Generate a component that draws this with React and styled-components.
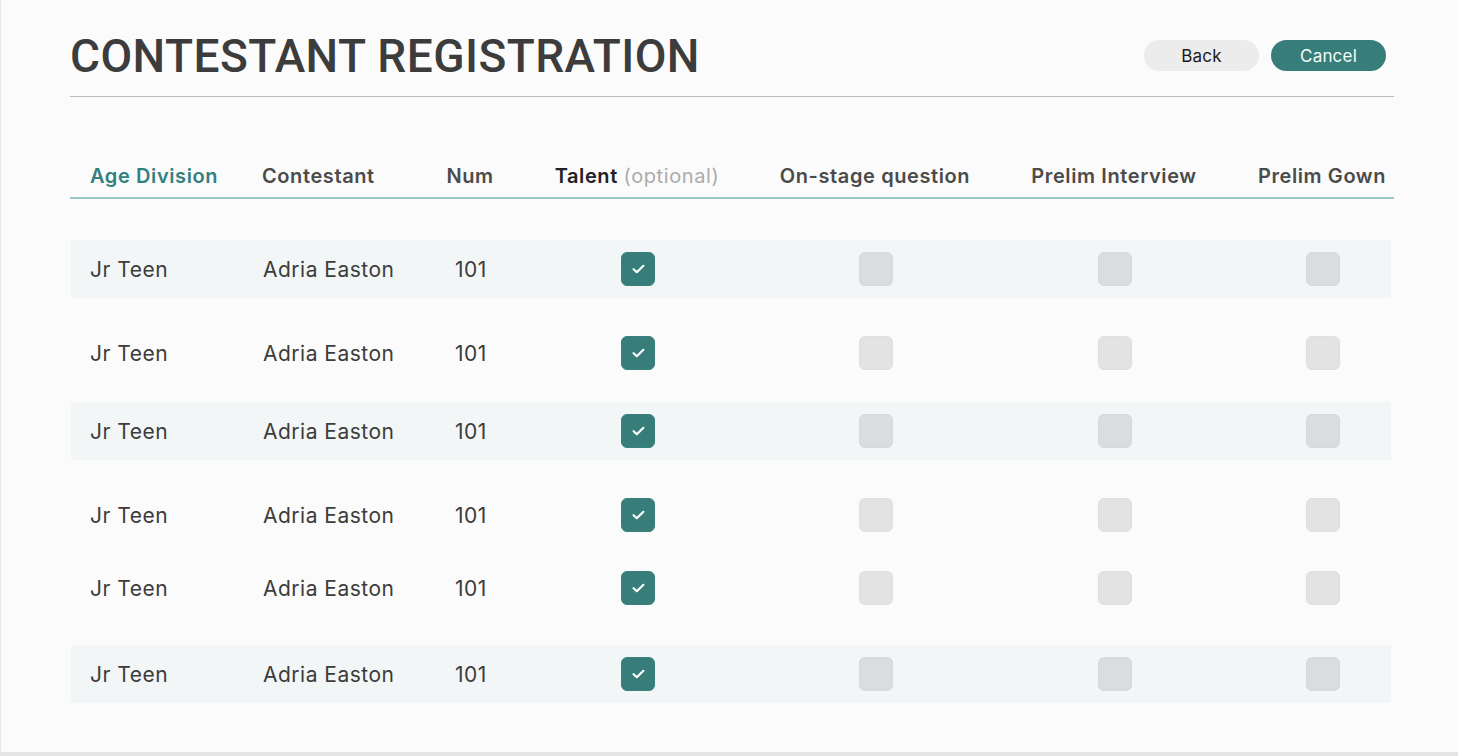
import React from "react";
import styled, { createGlobalStyle } from "styled-components";

const GlobalStyle = createGlobalStyle`
    html, body {
        margin: 0;
        padding: 0;
        background: #e4e4e4;
    }
    body {
        font-family: Inter, "Noto Sans", sans-serif;
    }
`;

// styles
const Page = styled.div`
    width: 1458px;
    height: 752px;
    box-sizing: border-box;
    background: #fbfbfb;
    border-left: 1px solid #e6e6e6;
    padding: 28px 64px 0 69px;
`;

const Header = styled.header`
    display: flex;
    align-items: center;
    justify-content: space-between;
    height: 56px;
    padding-bottom: 12px;
    border-bottom: 1px solid #bcbcbc;
`;

const Title = styled.h1`
    margin: 0;
    font-family: Roboto, "Liberation Sans", sans-serif;
    font-weight: 500;
    font-size: 46px;
    line-height: 58px;
    color: #3c3c3c;
    letter-spacing: 0.45px;
`;

const Actions = styled.div`
    display: flex;
    gap: 12px;
    margin-right: 8px;
    margin-top: -1px;
`;

const Button = styled.button`
    width: 115px;
    height: 31px;
    border: none;
    border-radius: 16px;
    font-family: Inter, sans-serif;
    font-size: 17px;
    letter-spacing: 0.2px;
    cursor: pointer;
    background: ${(p) => (p.primary ? "#377e7b" : "#ececec")};
    color: ${(p) => (p.primary ? "#f4fbfa" : "#1a1a1a")};
`;

const columns = "172px 178px 100px 234px 242px 236px 162px";

const HeadRow = styled.div`
    display: grid;
    grid-template-columns: ${columns};
    align-items: center;
    height: 42px;
    margin-top: 58px;
    border-bottom: 2px solid #97c8c7;
`;

const HeadCell = styled.div`
    font-size: 20px;
    font-weight: 600;
    letter-spacing: 0.6px;
    color: ${(p) => (p.active ? "#338080" : p.dark ? "#222" : "#4b4b4b")};
    text-align: ${(p) => (p.left ? "left" : "center")};
    padding-left: ${(p) => p.pad || 0}px;
    white-space: nowrap;
`;

const Optional = styled.span`
    font-weight: 400;
    color: #ababab;
`;

const Row = styled.div`
    display: grid;
    grid-template-columns: ${columns};
    align-items: center;
    height: 58px;
    margin-top: ${(p) => p.gap}px;
    margin-left: 1px;
    margin-right: 3px;
    background: ${(p) => (p.shaded ? "#f3f6f6" : "transparent")};
`;

const Cell = styled.div`
    font-size: 21px;
    letter-spacing: 0.5px;
    color: #3c3c3c;
    display: flex;
    justify-content: ${(p) => (p.left ? "flex-start" : "center")};
    padding-left: ${(p) => p.pad || 0}px;
`;

const Box = styled.div`
    width: 34px;
    height: 34px;
    box-sizing: border-box;
    border-radius: 6px;
    display: flex;
    align-items: center;
    justify-content: center;
    background: ${(p) =>
        p.checked ? "#377e7b" : p.shaded ? "#dadddd" : "#e3e3e3"};
    border: 1px solid
        ${(p) => (p.checked ? "#3a8280" : p.shaded ? "#d6d9d9" : "#dfdfdf")};
`;

function Check({ checked, shaded }) {
    return (
        <Box checked={checked} shaded={shaded}>
            {checked && (
                <svg width="13" height="10" viewBox="0 0 13 10">
                    <polyline
                        points="1.6,5.2 4.8,8.2 11.4,1.8"
                        fill="none"
                        stroke="#fff"
                        strokeWidth="2.2"
                        strokeLinecap="round"
                        strokeLinejoin="round"
                    />
                </svg>
            )}
        </Box>
    );
}

const rows = [
    { gap: 41, shaded: true },
    { gap: 26, shaded: false },
    { gap: 20, shaded: true },
    { gap: 26, shaded: false },
    { gap: 15, shaded: false },
    { gap: 28, shaded: true },
];

export default function App() {
    return (
        <>
            <GlobalStyle />
            <Page>
                <Header>
                    <Title>CONTESTANT REGISTRATION</Title>
                    <Actions>
                        <Button>Back</Button>
                        <Button primary>Cancel</Button>
                    </Actions>
                </Header>
                <HeadRow>
                    <HeadCell left active pad={20}>
                        Age Division
                    </HeadCell>
                    <HeadCell left pad={20}>
                        Contestant
                    </HeadCell>
                    <HeadCell>Num</HeadCell>
                    <HeadCell dark>
                        Talent <Optional>(optional)</Optional>
                    </HeadCell>
                    <HeadCell>On-stage question</HeadCell>
                    <HeadCell>Prelim Interview</HeadCell>
                    <HeadCell pad={18}>Prelim Gown</HeadCell>
                </HeadRow>
                {rows.map((row, index) => (
                    <Row key={index} gap={row.gap} shaded={row.shaded}>
                        <Cell left pad={19}>
                            Jr Teen
                        </Cell>
                        <Cell left pad={20}>
                            Adria Easton
                        </Cell>
                        <Cell>101</Cell>
                        <Cell>
                            <Check checked shaded={row.shaded} />
                        </Cell>
                        <Cell>
                            <Check shaded={row.shaded} />
                        </Cell>
                        <Cell>
                            <Check shaded={row.shaded} />
                        </Cell>
                        <Cell pad={18}>
                            <Check shaded={row.shaded} />
                        </Cell>
                    </Row>
                ))}
            </Page>
        </>
    );
}
